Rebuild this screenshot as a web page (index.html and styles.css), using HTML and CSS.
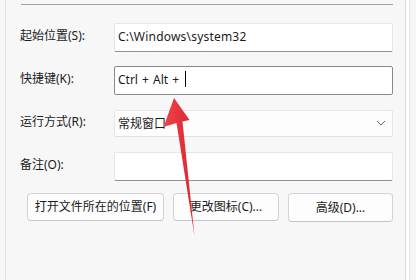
FILE: index.html
```html
<!DOCTYPE html>
<html lang="zh-CN">
<head>
    <meta charset="UTF-8">
    <meta name="viewport" content="width=device-width, initial-scale=1.0">
    <title>快捷方式属性</title>
    <link rel="stylesheet" href="styles.css">
</head>
<body>
    <div class="window">
        <div class="content">
            <div class="divider"></div>

            <div class="form">
                <label class="label" for="startIn">起始位置(S):</label>
                <div class="field"><input id="startIn" class="input" type="text" value="C:\Windows\system32"></div>

                <label class="label" for="hotkey">快捷键(K):</label>
                <div class="field field-focus">
                    <span class="hotkey-text">Ctrl + Alt + </span><span class="caret"></span>
                </div>

                <label class="label" for="runMode">运行方式(R):</label>
                <div class="field field-select" id="runMode">
                    <span>常规窗口</span>
                    <svg class="chevron" width="10" height="6" viewBox="0 0 10 6">
                        <path d="M1 1 L5 5 L9 1" fill="none" stroke="#6b6b6b" stroke-width="1"/>
                    </svg>
                </div>

                <label class="label" for="comment">备注(O):</label>
                <div class="field"><input id="comment" class="input" type="text" value=""></div>
            </div>

            <div class="buttons">
                <button class="btn btn-open">打开文件所在的位置(F)</button>
                <button class="btn btn-icon">更改图标(C)...</button>
                <button class="btn btn-adv">高级(D)...</button>
            </div>
        </div>
        <div class="frame"></div>
    </div>

    <!-- annotation arrow drawn over the dialog -->
    <svg class="arrow" width="416" height="280" viewBox="0 0 416 280">
        <defs>
            <linearGradient id="red" x1="0" y1="0" x2="1" y2="0">
                <stop offset="0" stop-color="#f0434a"/>
                <stop offset="1" stop-color="#d9262d"/>
            </linearGradient>
        </defs>
        <polygon points="174,98 189.5,120 182.5,121.5 194.5,236 176.5,123 163.5,127" fill="url(#red)"/>
    </svg>
</body>
</html>
```

FILE: styles.css
```css
body {
    margin: 0;
    width: 416px;
    height: 280px;
    overflow: hidden;
    background-color: #f7f7f7;
    font-family: "Noto Sans", "Noto Sans CJK SC", sans-serif;
    font-size: 12px;
    color: #1b1b1b;
    position: relative;
}

.window {
    display: flex;
    height: 280px;
}

.content {
    flex: 1;
    margin-left: 5px;
    border-left: 1px solid #e4e4e4;
    border-right: 1px solid #dadada;
    padding: 4px 12px 0 14px;
}

.divider {
    height: 1px;
    margin-left: 1px;
    background-color: #a3a3a3;
}

.form {
    display: grid;
    grid-template-columns: 94px 1fr;
    grid-auto-rows: 29px;
    row-gap: 14px;
    margin-top: 18px;
    align-items: center;
}

.label {
    line-height: 29px;
    margin-top: -4px;
}

.field {
    height: 29px;
    box-sizing: border-box;
    background-color: #fff;
    border: 1px solid #e6e6e6;
    border-bottom-color: #8f8f8f;
    border-radius: 2px;
    display: flex;
    align-items: center;
    padding: 0 3px 3px;
}

.field-focus {
    border-color: #8a8a8a;
}

.field-select {
    height: 27px;
    background-color: #fdfdfd;
    border-bottom-color: #e0e0e0;
    justify-content: space-between;
    padding-right: 6px;
    padding-bottom: 1px;
}

.input {
    border: none;
    outline: none;
    background: transparent;
    font: inherit;
    color: inherit;
    padding: 0;
    width: 100%;
    letter-spacing: 0.2px;
}

.hotkey-text {
    white-space: pre;
    word-spacing: 1px;
}

.caret {
    display: inline-block;
    width: 1px;
    height: 16px;
    background-color: #000;
    margin-left: 2px;
}

.buttons {
    display: flex;
    gap: 9px;
    margin-top: 12px;
    padding-left: 7px;
}

.btn {
    height: 28px;
    background-color: #fdfdfd;
    border: 1px solid #d3d3d3;
    border-bottom-color: #c4c4c4;
    border-radius: 4px;
    font: inherit;
    color: #1b1b1b;
    padding: 0 0 2px;
}

.btn-open {
    width: 137px;
}

.btn-icon {
    width: 106px;
}

.btn-adv {
    width: 105px;
    height: 29px;
}

.frame {
    width: 10px;
    background: linear-gradient(to right, #ffffff 0 3px, #e6e6e6 3px 4px, #f6f6f6 4px);
}

.arrow {
    position: absolute;
    left: 0;
    top: 0;
    pointer-events: none;
}
```
